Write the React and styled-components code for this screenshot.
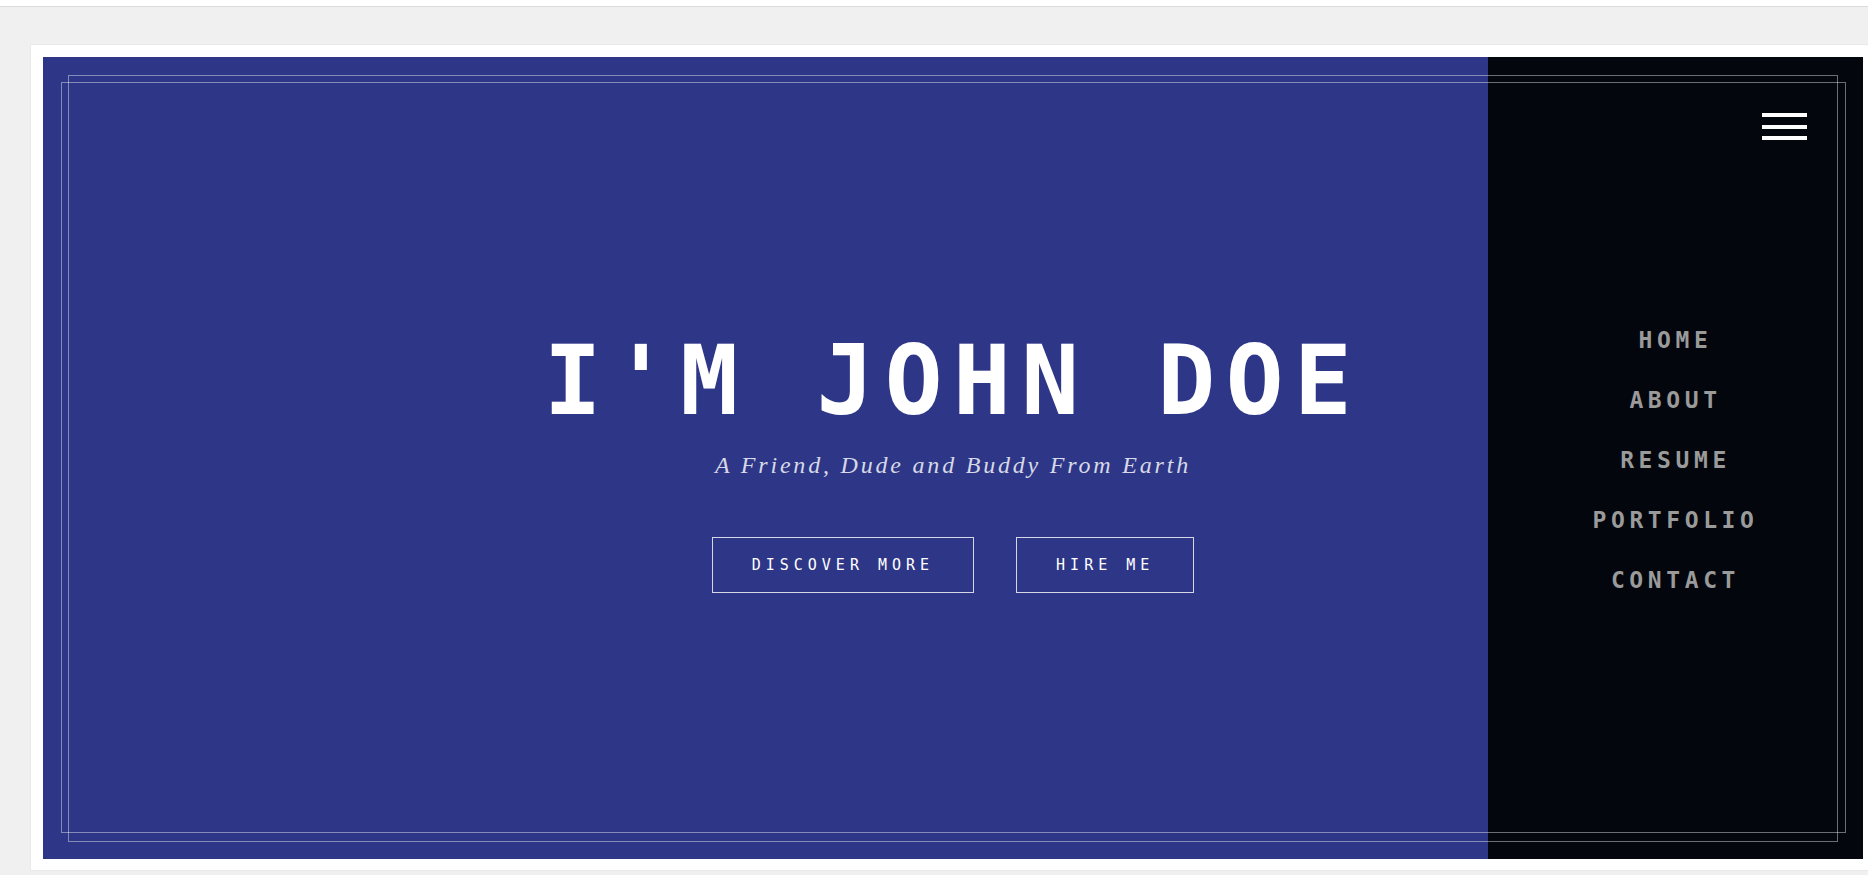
import React from "react";
import styled, { createGlobalStyle } from "styled-components";

const GlobalStyle = createGlobalStyle`
  html, body {
    margin: 0;
    padding: 0;
    background-color: #f0f0f0;
    overflow: hidden;
  }
  * {
    box-sizing: border-box;
  }
`;

const TopStrip = styled.div`
  height: 7px;
  background-color: #ffffff;
  border-bottom: 1px solid #dcdcdc;
`;

const Frame = styled.div`
  margin: 37px 0 0 30px;
  width: 1846px;
  background-color: #ffffff;
  border: 1px solid #e9e9e9;
  padding: 12px 12px 11px;
`;

const Hero = styled.section`
  position: relative;
  width: 1820px;
  height: 802px;
  background-color: #2e3787;
  display: flex;
  flex-direction: column;
  justify-content: center;
  align-items: center;
  padding-top: 10px;
  overflow: hidden;
`;

const Outline = styled.div`
  position: absolute;
  inset: ${(props) => props.inset};
  border: 1px solid rgba(255, 255, 255, 0.42);
  pointer-events: none;
  z-index: 3;
`;

const Title = styled.h1`
  margin: 0;
  font-family: "DejaVu Sans Mono", monospace;
  font-weight: bold;
  font-size: 96px;
  line-height: 1;
  letter-spacing: 10.4px;
  color: #ffffff;
  white-space: nowrap;
`;

const Subtitle = styled.p`
  margin: 22px 0 0;
  font-family: "Liberation Serif", serif;
  font-style: italic;
  font-size: 24px;
  line-height: 29px;
  letter-spacing: 2.8px;
  color: rgba(255, 255, 255, 0.82);
`;

const Actions = styled.div`
  display: flex;
  gap: 42px;
  margin-top: 57px;
`;

const OutlineButton = styled.a`
  display: flex;
  align-items: center;
  height: 56px;
  padding: 0 39px;
  border: 1px solid rgba(255, 255, 255, 0.8);
  font-family: "DejaVu Sans Mono", monospace;
  font-size: 15px;
  letter-spacing: 5px;
  color: #ffffff;
  text-decoration: none;
`;

const NavPanel = styled.nav`
  position: absolute;
  top: 0;
  right: 0;
  bottom: 0;
  width: 375px;
  background-color: #03060d;
  display: flex;
  flex-direction: column;
  justify-content: center;
  align-items: center;
  padding-top: 4px;
  z-index: 2;
`;

const Burger = styled.div`
  position: absolute;
  top: 56px;
  right: 56px;
  width: 45px;
  display: flex;
  flex-direction: column;
  gap: 7.5px;
  span {
    display: block;
    height: 4px;
    background-color: #ffffff;
  }
`;

const NavLink = styled.a`
  display: block;
  line-height: 60px;
  font-family: "DejaVu Sans Mono", monospace;
  font-weight: bold;
  font-size: 23px;
  letter-spacing: 4.6px;
  color: #9a9a9a;
  text-decoration: none;
`;

const links = ["HOME", "ABOUT", "RESUME", "PORTFOLIO", "CONTACT"];

function App() {
  return (
    <>
      <GlobalStyle />
      <TopStrip />
      <Frame>
        <Hero>
          <Title>I'M JOHN DOE</Title>
          <Subtitle>A Friend, Dude and Buddy From Earth</Subtitle>
          <Actions>
            <OutlineButton href="#about">DISCOVER MORE</OutlineButton>
            <OutlineButton href="#contact">HIRE ME</OutlineButton>
          </Actions>
          <NavPanel>
            <Burger>
              <span />
              <span />
              <span />
            </Burger>
            {links.map((link) => (
              <NavLink key={link} href={`#${link.toLowerCase()}`}>
                {link}
              </NavLink>
            ))}
          </NavPanel>
          <Outline inset="18px 25px 17px 25px" />
          <Outline inset="25px 17px 26px 18px" />
        </Hero>
      </Frame>
    </>
  );
}

export default App;
